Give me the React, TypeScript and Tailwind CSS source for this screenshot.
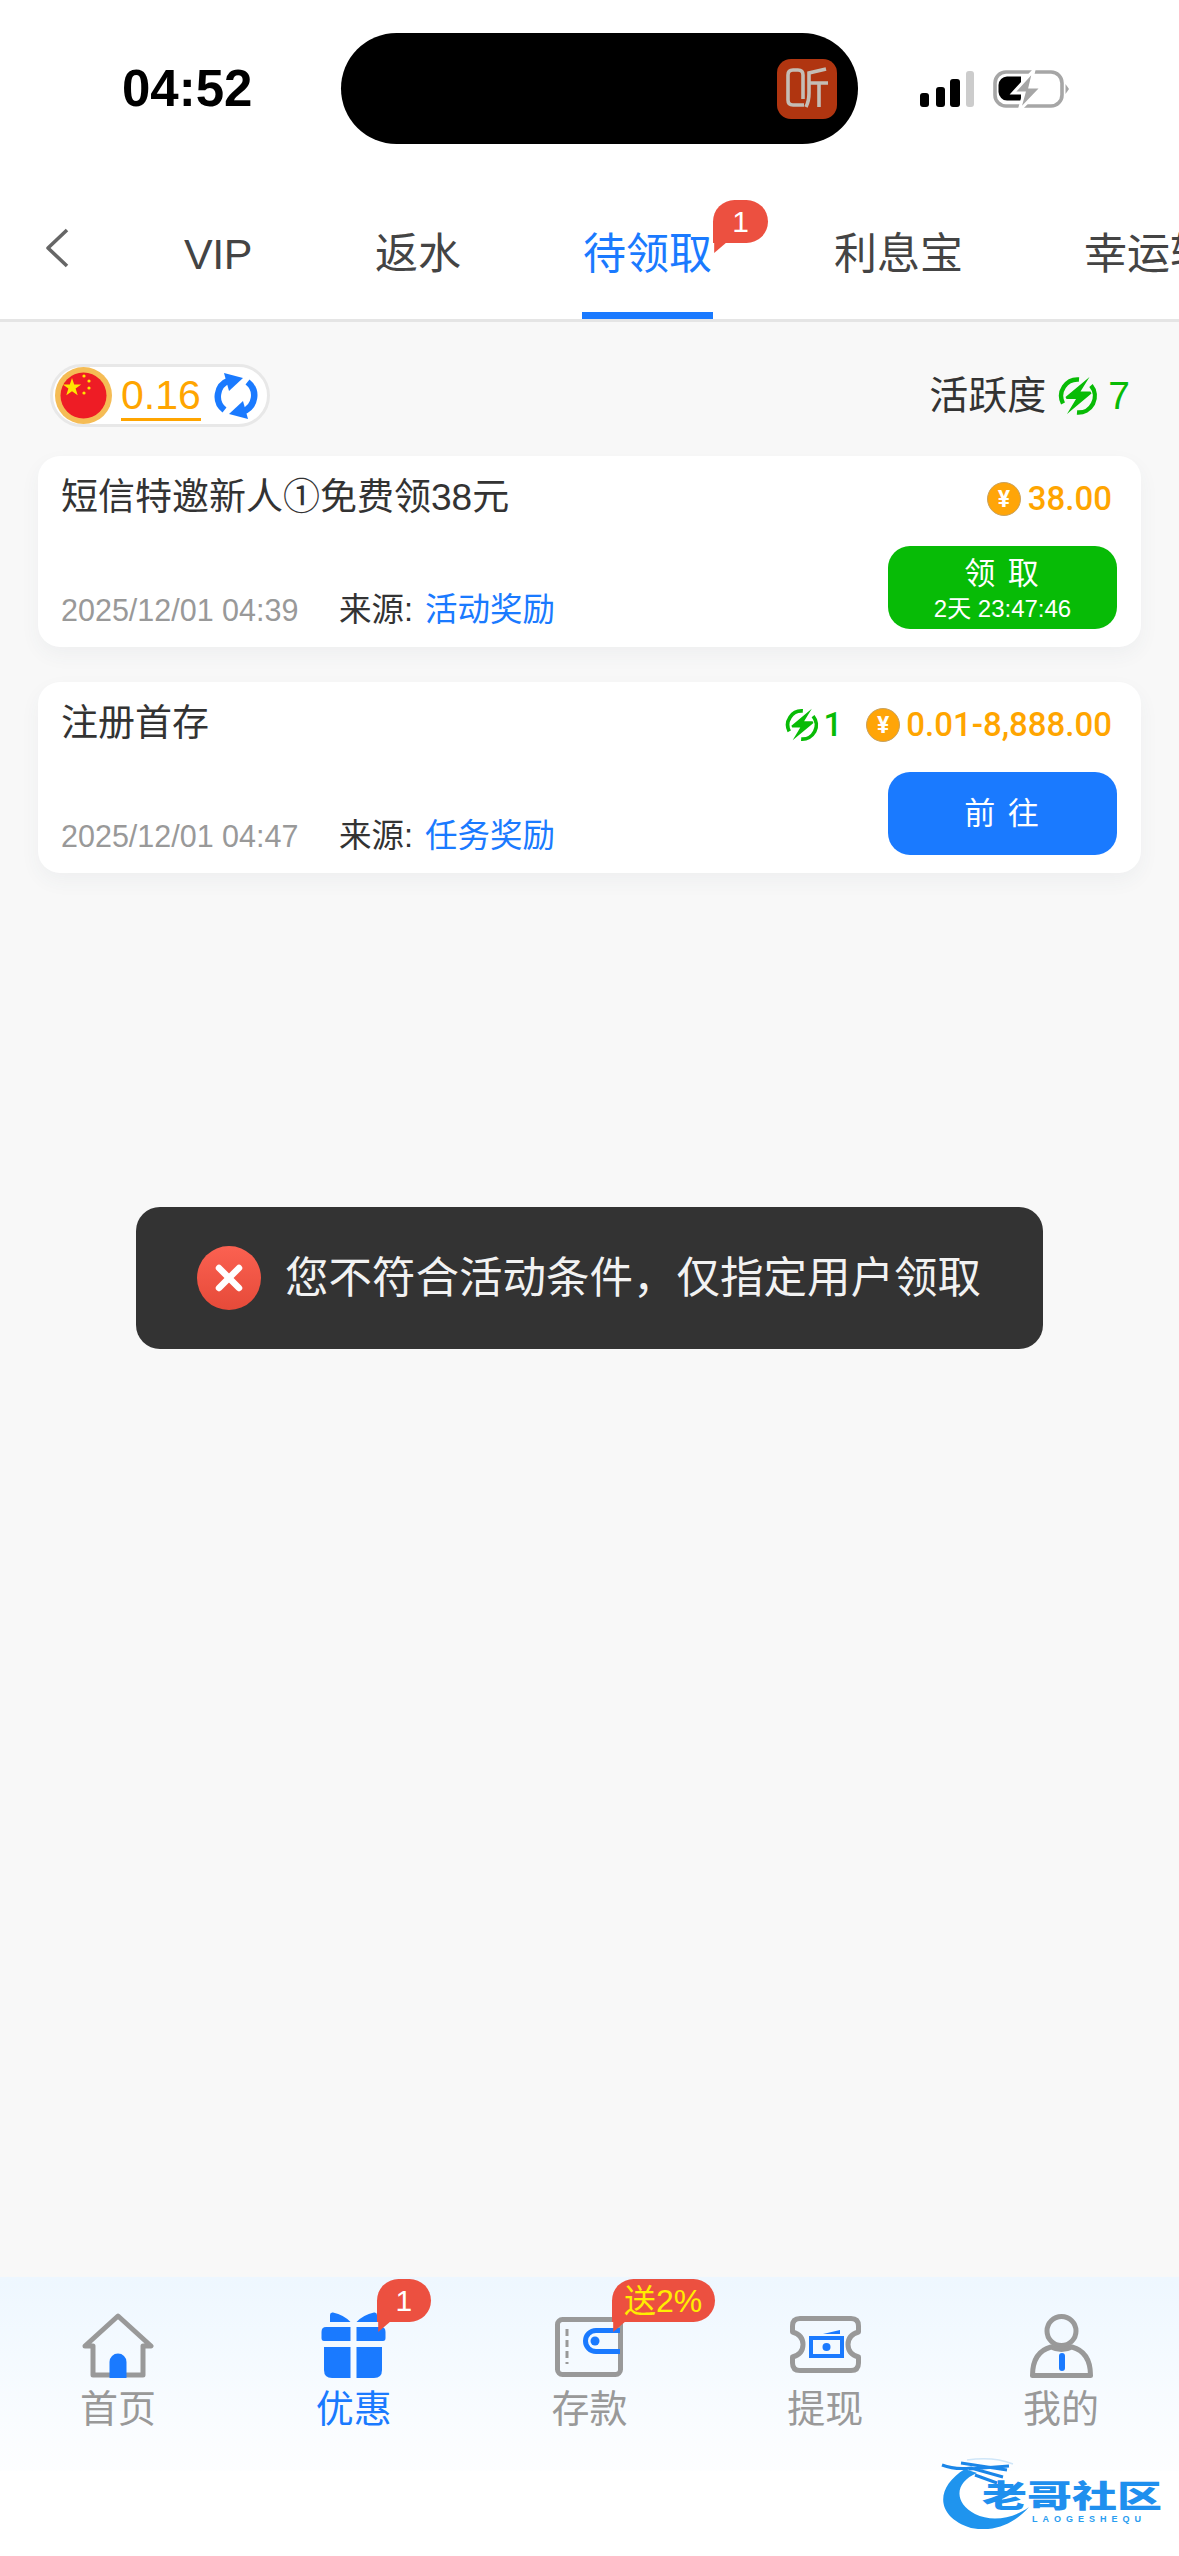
import React from "react";

function Bolt({ className }: { className: string }) {
  return (
    <svg viewBox="0 0 40 40" className={className}>
      <path d="M21 3.5A16.5 16.5 0 0 0 5 27.5" fill="none" stroke="#08bb06" strokeWidth="4.4" />
      <path d="M33 9.5A16.5 16.5 0 0 1 19 36.5" fill="none" stroke="#08bb06" strokeWidth="4.4" />
      <path d="M31.5 1 L7.5 21 L8.5 23 H18 L9 38 L33.5 17.5 L32.5 15.5 H22.5 Z" fill="#08bb06" />
    </svg>
  );
}

function Coin() {
  return (
    <span className="flex h-[34px] w-[34px] shrink-0 items-center justify-center rounded-full border border-[#c9a25e] bg-[#ffa508] text-[23px] font-bold leading-none text-white">
      ¥
    </span>
  );
}

function Bubble({ className, children }: { className: string; children: React.ReactNode }) {
  return (
    <span className={`absolute flex items-center justify-center rounded-[22px] rounded-bl-none bg-[#ec5040] text-white ${className}`}>
      {children}
      <svg viewBox="0 0 14 12" className="absolute left-0 top-full h-[10px] w-[14px]">
        <path d="M0 0H14L0 12Z" fill="#ec5040" />
      </svg>
    </span>
  );
}

function Card({
  title,
  date,
  source,
  right,
  button,
}: {
  title: string;
  date: string;
  source: string;
  right: React.ReactNode;
  button: React.ReactNode;
}) {
  return (
    <div className="flex h-[191px] flex-col justify-between rounded-[22px] bg-white pb-[18px] pl-[23px] pr-[24px] pt-[20px] shadow-[0_8px_20px_rgba(60,70,90,0.05)]">
      <div className="flex items-center justify-between">
        <span className="text-[37px] leading-[44px] text-[#333]">{title}</span>
        <div className="mr-[5px] mt-[2px] flex items-center [font-family:Roboto,'Liberation_Sans',sans-serif]">{right}</div>
      </div>
      <div className="flex items-end justify-between">
        <div className="flex items-center leading-[38px]">
          <span className="w-[278px] text-[30.5px] text-[#999]">{date}</span>
          <span className="text-[32.5px] text-[#333]">来源:</span>
          <span className="ml-[12px] text-[32.5px] text-[#1a7aff]">{source}</span>
        </div>
        {button}
      </div>
    </div>
  );
}

function NavItem({ label, active, children }: { label: string; active?: boolean; children: React.ReactNode }) {
  return (
    <div className="relative flex flex-col items-center">
      <div className="flex h-[66px] items-end">{children}</div>
      <span className={`mt-[6px] text-[38px] leading-[50px] ${active ? "text-[#1a7aff]" : "text-[#999]"}`}>{label}</span>
    </div>
  );
}

export default function App() {
  return (
    <div className="relative flex h-[2556px] w-[1179px] flex-col overflow-hidden bg-white [font-family:'Liberation_Sans','Noto_Sans_CJK_SC',sans-serif]">
      {/* Header */}
      <header className="border-b-[3px] border-[#e5e5e5] bg-white">
        <div className="flex h-[144px] items-center pl-[122px] pt-[33px]">
          <span className="w-[219px] text-[51px] font-bold leading-none text-black">04:52</span>
          <div className="flex h-[111px] w-[517px] items-center justify-end rounded-[56px] bg-black pr-[21px]">
            <svg viewBox="0 0 60 60" className="h-[60px] w-[60px] rounded-[14px] bg-[#b03510]">
              <path d="M27 46 H16 Q11 46 11 41 V16 Q11 11 16 11 H21 Q26 11 26 16 V40" fill="none" stroke="#c4bdb5" strokeWidth="3.6" />
              <path d="M49 10 L32 14 V34 Q32 42 29 48" fill="none" stroke="#c4bdb5" strokeWidth="3.6" />
              <path d="M32 24 H51 M42 24 V48" fill="none" stroke="#c4bdb5" strokeWidth="3.6" />
            </svg>
          </div>
          <svg viewBox="0 0 54 36" className="ml-[62px] h-[36px] w-[54px]">
            <rect x="0" y="22" width="9" height="14" rx="3" fill="#000" />
            <rect x="16" y="16" width="9" height="20" rx="3" fill="#000" />
            <rect x="30" y="8" width="10" height="28" rx="3" fill="#000" />
            <rect x="46" y="0" width="8" height="36" rx="3" fill="#ccc" />
          </svg>
          <svg viewBox="0 0 76 38" className="ml-[19px] h-[38px] w-[76px] overflow-visible">
            <rect x="2" y="2" width="67" height="34" rx="11" fill="none" stroke="#a6a6a6" strokeWidth="3.6" />
            <path d="M14 6.5 H28 V30.5 H14 A 9 9 0 0 1 5.5 22 V15 A 9 9 0 0 1 14 6.5Z" fill="#000" />
            <path d="M72.5 14 L76 19 L72.5 24Z" fill="#a6a6a6" />
            <path d="M41 0 L20 23 H31 L26 41 L49 17 H37 Z" fill="#a6a6a6" stroke="#fff" strokeWidth="3" />
          </svg>
        </div>
        <div className="flex h-[175px] overflow-hidden pl-[45px]">
          <svg viewBox="0 0 24 40" className="mt-[84px] h-[40px] w-[24px] shrink-0">
            <path d="M22 2 L3 20 L22 38" fill="none" stroke="#666" strokeWidth="3.6" strokeLinejoin="round" />
          </svg>
          <nav className="ml-[115px] flex min-w-0 flex-1 gap-[121px] text-[43px] text-[#444]">
            <div className="mt-[82px] h-[56px] w-[70px] shrink-0 leading-[56px] tracking-[-0.5px]">VIP</div>
            <div className="mt-[82px] h-[56px] shrink-0 leading-[56px]">返水</div>
            <div className="relative flex w-[131px] shrink-0 flex-col items-stretch text-center text-[#1a7aff]">
              <span className="mt-[82px] h-[86px] leading-[56px]">待领取</span>
              <span className="h-[7px] bg-[#1a7aff]" />
              <Bubble className="left-[131px] top-[56px] h-[43px] w-[55px] text-[30px]">1</Bubble>
            </div>
            <div className="mt-[82px] h-[56px] shrink-0 leading-[56px]">利息宝</div>
            <div className="mt-[82px] h-[56px] min-w-0 flex-1 overflow-hidden whitespace-nowrap leading-[56px]">幸运转盘</div>
          </nav>
        </div>
      </header>

      {/* Content */}
      <main className="flex flex-1 flex-col gap-[35px] bg-[#f8f8f8] px-[38px] pt-[42px]">
        <div className="-mb-[6px] flex h-[63px] items-center justify-between pl-[12px] pr-[11px]">
          <div className="flex h-[63px] w-[220px] items-center rounded-full border-[3px] border-[#e8e8e8] bg-white pl-[2px]">
            <svg viewBox="0 0 57 57" className="h-[57px] w-[57px] shrink-0">
              <circle cx="28.5" cy="28.5" r="28.5" fill="#f5bc55" />
              <circle cx="28.5" cy="28.5" r="23" fill="#ee1c25" />
              <path d="M17 11l2.2 6.6 7-.1-5.6 4.1 2.1 6.7-5.7-4-5.7 4 2.1-6.7-5.6-4.1 7 .1Z" fill="#ffe600" />
              <circle cx="29" cy="9" r="1.6" fill="#ffe600" />
              <circle cx="34" cy="14" r="1.6" fill="#ffe600" />
              <circle cx="34" cy="21" r="1.6" fill="#ffe600" />
              <circle cx="29" cy="26" r="1.6" fill="#ffe600" />
            </svg>
            <span className="ml-[9px] mt-[2px] border-b-[3px] border-[#ffa500] text-[41px] leading-[45px] text-[#ffa500]">0.16</span>
            <svg viewBox="0 0 44 46" className="ml-[13px] h-[46px] w-[44px] shrink-0">
              <path d="M10.5 37A17 17 0 0 1 15 7.5" fill="none" stroke="#1a7aff" strokeWidth="6.5" />
              <path d="M10 0 L29 5 L15 18 Z" fill="#1a7aff" />
              <path d="M33.5 9A17 17 0 0 1 29 38.5" fill="none" stroke="#1a7aff" strokeWidth="6.5" />
              <path d="M34 46 L15 41 L29 28 Z" fill="#1a7aff" />
            </svg>
          </div>
          <div className="flex items-center text-[39px] leading-[46px] text-[#333]">
            <span>活跃度</span>
            <Bolt className="ml-[12px] h-[40px] w-[40px]" />
            <span className="ml-[10px] text-[#08bb06]">7</span>
          </div>
        </div>

        <Card
          title="短信特邀新人①免费领38元"
          date="2025/12/01 04:39"
          source="活动奖励"
          right={
            <>
              <Coin />
              <span className="ml-[7px] text-[33px] font-medium leading-[40px] text-[#ffa500]">38.00</span>
            </>
          }
          button={
            <div className="flex h-[83px] w-[229px] flex-col items-center justify-center rounded-[22px] bg-[#07bb06] pt-[3px] text-white">
              <span className="text-[31px] leading-[40px] tracking-[2px]">领 取</span>
              <span className="text-[24px] leading-[30px]">2天 23:47:46</span>
            </div>
          }
        />
        <Card
          title="注册首存"
          date="2025/12/01 04:47"
          source="任务奖励"
          right={
            <>
              <Bolt className="h-[34px] w-[34px]" />
              <span className="ml-[5px] text-[33px] font-medium leading-[40px] text-[#08bb06]">1</span>
              <span className="ml-[24px]">
                <Coin />
              </span>
              <span className="ml-[6px] text-[33px] font-medium leading-[40px] text-[#ffa500]">0.01-8,888.00</span>
            </>
          }
          button={
            <div className="flex h-[83px] w-[229px] items-center justify-center rounded-[22px] bg-[#1a7aff] pt-[2px] text-[31px] tracking-[2px] text-white">
              前 往
            </div>
          }
        />
      </main>

      {/* Bottom nav */}
      <div className="h-[279px] bg-white">
        <nav className="grid h-[194px] grid-cols-5 bg-gradient-to-b from-[#eef7ff] to-[#fdfeff] pt-[35px]">
          <NavItem label="首页">
            <svg viewBox="0 0 72 65" className="h-[65px] w-[72px]">
              <path d="M3 33 L36 3 L69 33 H61 V62 H11 V33 Z" fill="none" stroke="#999" strokeWidth="5" strokeLinejoin="round" />
              <path d="M27.5 65 V49 A8.5 8.5 0 0 1 44.5 49 V65 Z" fill="#1a7aff" />
            </svg>
          </NavItem>
          <NavItem label="优惠" active>
            <svg viewBox="0 0 65 66" className="h-[66px] w-[65px]">
              <path d="M9 3 Q9 0 12 0.5 Q23 3 29.5 10 H9 Z" fill="#1a7aff" />
              <path d="M35.5 10 Q42 3 53 0.5 Q56 0 56 3 V10 Z" fill="#1a7aff" />
              <path d="M0.5 20 Q0.5 15 5 15 H29.5 V29 H3 Q0.5 29 0.5 26 Z" fill="#1a7aff" />
              <path d="M35.5 15 H60 Q64.5 15 64.5 20 V26 Q64.5 29 62 29 H35.5 Z" fill="#1a7aff" />
              <path d="M3 35 H29.5 V66 H11 Q3 66 3 58 Z" fill="#1a7aff" />
              <path d="M35.5 35 H61 V58 Q61 66 53 66 H35.5 Z" fill="#1a7aff" />
            </svg>
            <Bubble className="left-[141px] top-[-33px] h-[43px] w-[54px] text-[30px]">1</Bubble>
          </NavItem>
          <NavItem label="存款">
            <svg viewBox="0 0 68 60" className="mb-[1px] h-[60px] w-[68px]">
              <rect x="2.5" y="2.5" width="63" height="55" rx="5" fill="none" stroke="#999" strokeWidth="5" />
              <path d="M12 12 V47" stroke="#999" strokeWidth="3" strokeDasharray="7 4" />
              <path d="M65 13.5 H41 A10.5 10.5 0 0 0 41 34.5 H65" fill="none" stroke="#1a7aff" strokeWidth="5" />
              <circle cx="40" cy="24" r="4.5" fill="#1a7aff" />
            </svg>
            <Bubble className="left-[140px] top-[-33px] h-[43px] w-[103px] whitespace-nowrap text-[32px] !text-[#ffee00]">送2%</Bubble>
          </NavItem>
          <NavItem label="提现">
            <svg viewBox="0 0 71 57" className="mb-[5px] h-[57px] w-[71px]">
              <path d="M10 2.5 H61 Q68.5 2.5 68.5 10 V16 Q58 19 58 28.5 Q58 38 68.5 41 V47 Q68.5 54.5 61 54.5 H10 Q2.5 54.5 2.5 47 V41 Q13 38 13 28.5 Q13 19 2.5 16 V10 Q2.5 2.5 10 2.5 Z" fill="none" stroke="#999" strokeWidth="5" strokeLinejoin="round" />
              <rect x="21" y="22" width="31" height="18" fill="none" stroke="#1a7aff" strokeWidth="4" />
              <circle cx="36.5" cy="31" r="4" fill="#1a7aff" />
              <path d="M33 18 L50 14 V18 Z" fill="#1a7aff" />
            </svg>
          </NavItem>
          <NavItem label="我的">
            <svg viewBox="0 0 63 64" className="h-[64px] w-[63px]">
              <circle cx="31.5" cy="17" r="14.5" fill="none" stroke="#999" strokeWidth="5" />
              <path d="M2.5 61.5 Q2.5 38 21 33 Q31.5 38 42 33 Q60.5 38 60.5 61.5 Z" fill="none" stroke="#999" strokeWidth="5" strokeLinejoin="round" />
              <rect x="29" y="39" width="6" height="18" rx="3" fill="#1a7aff" />
            </svg>
          </NavItem>
        </nav>
      </div>

      {/* Watermark */}
      <div className="absolute left-[941px] top-[2457px] h-[72px] w-[222px]">
        <svg viewBox="0 0 222 72" className="absolute inset-0 h-full w-full">
          <path d="M24 12 C-6 30 -6 60 30 71 C55 76 75 65 88 50 C72 62 50 65 34 57 C12 45 14 25 36 16 Z" fill="#1f94ee" />
          <path d="M1 8 Q14 13 30 11 L62 20 M20 6 L66 13 M28 12 L68 9 M34 18 L56 26" fill="none" stroke="#1a86e8" strokeWidth="3" />
          <path d="M26 3 Q52 -1 72 7" fill="none" stroke="#cfe6f8" strokeWidth="1.5" />
        </svg>
        <span className="absolute left-[41px] top-[15px] origin-center scale-y-[0.68] whitespace-nowrap text-[45px] font-black leading-[50px] text-[#1f8fee]">老哥社区</span>
        <span className="absolute left-[91px] top-[57px] whitespace-nowrap text-[9px] font-bold leading-[10px] tracking-[5px] text-[#2a9df0]">LAOGESHEQU</span>
      </div>

      {/* Toast */}
      <div className="absolute left-[136px] top-[1207px] flex h-[142px] w-[907px] items-center rounded-[24px] bg-[#333] pl-[61px]">
        <svg viewBox="0 0 64 64" className="h-[64px] w-[64px] shrink-0">
          <defs>
            <linearGradient id="red" x1="0" y1="0" x2="0" y2="1">
              <stop offset="0" stopColor="#fb6151" />
              <stop offset="1" stopColor="#e64a39" />
            </linearGradient>
          </defs>
          <circle cx="32" cy="32" r="32" fill="url(#red)" />
          <path d="M22 22 L42 42 M42 22 L22 42" stroke="#fff" strokeWidth="6.5" strokeLinecap="round" />
        </svg>
        <span className="ml-[24px] whitespace-nowrap text-[43.5px] leading-[56px] text-[#f2f2f2]">您不符合活动条件，仅指定用户领取</span>
      </div>
    </div>
  );
}
